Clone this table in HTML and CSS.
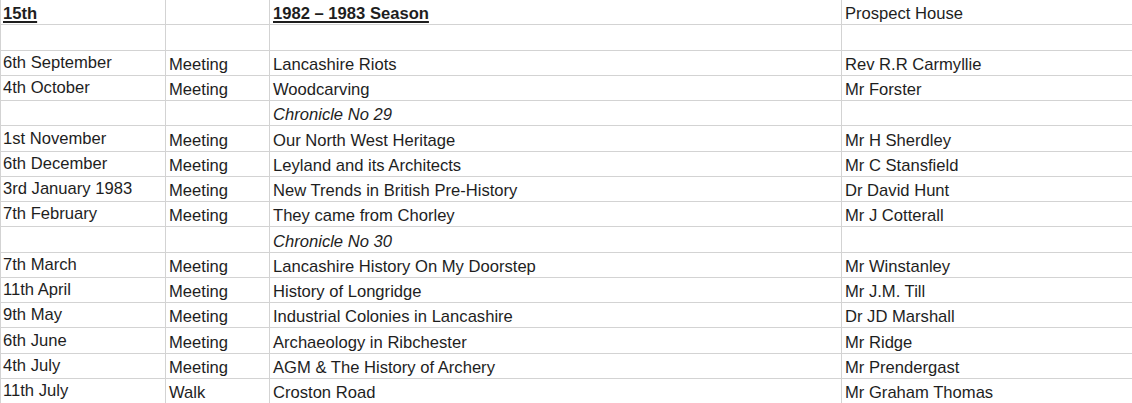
FILE: index.html
```html
<!DOCTYPE html>
<html lang="en">
<head>
<meta charset="utf-8">
<title>1982 – 1983 Season</title>
<link rel="stylesheet" href="styles.css">
</head>
<body>
<div class="sheet">
  <div class="row head">
    <div class="cell c1"><span class="bu">15th</span></div>
    <div class="cell c2"></div>
    <div class="cell c3"><span class="bu">1982 – 1983 Season</span></div>
    <div class="cell c4">Prospect House</div>
  </div>
  <div class="row">
    <div class="cell c1"></div><div class="cell c2"></div><div class="cell c3"></div><div class="cell c4"></div>
  </div>
  <div class="row">
    <div class="cell c1">6th September</div><div class="cell c2">Meeting</div><div class="cell c3">Lancashire Riots</div><div class="cell c4">Rev R.R Carmyllie</div>
  </div>
  <div class="row">
    <div class="cell c1">4th October</div><div class="cell c2">Meeting</div><div class="cell c3">Woodcarving</div><div class="cell c4">Mr Forster</div>
  </div>
  <div class="row">
    <div class="cell c1"></div><div class="cell c2"></div><div class="cell c3 it">Chronicle No 29</div><div class="cell c4"></div>
  </div>
  <div class="row">
    <div class="cell c1">1st November</div><div class="cell c2">Meeting</div><div class="cell c3">Our North West Heritage</div><div class="cell c4">Mr H Sherdley</div>
  </div>
  <div class="row">
    <div class="cell c1">6th December</div><div class="cell c2">Meeting</div><div class="cell c3">Leyland and its Architects</div><div class="cell c4">Mr C Stansfield</div>
  </div>
  <div class="row">
    <div class="cell c1">3rd January 1983</div><div class="cell c2">Meeting</div><div class="cell c3">New Trends in British Pre-History</div><div class="cell c4">Dr David Hunt</div>
  </div>
  <div class="row">
    <div class="cell c1">7th February</div><div class="cell c2">Meeting</div><div class="cell c3">They came from Chorley</div><div class="cell c4">Mr J Cotterall</div>
  </div>
  <div class="row">
    <div class="cell c1"></div><div class="cell c2"></div><div class="cell c3 it">Chronicle No 30</div><div class="cell c4"></div>
  </div>
  <div class="row">
    <div class="cell c1">7th March</div><div class="cell c2">Meeting</div><div class="cell c3">Lancashire History On My Doorstep</div><div class="cell c4">Mr Winstanley</div>
  </div>
  <div class="row">
    <div class="cell c1">11th April</div><div class="cell c2">Meeting</div><div class="cell c3">History of Longridge</div><div class="cell c4">Mr J.M. Till</div>
  </div>
  <div class="row">
    <div class="cell c1">9th May</div><div class="cell c2">Meeting</div><div class="cell c3">Industrial Colonies in Lancashire</div><div class="cell c4">Dr JD Marshall</div>
  </div>
  <div class="row">
    <div class="cell c1">6th June</div><div class="cell c2">Meeting</div><div class="cell c3">Archaeology in Ribchester</div><div class="cell c4">Mr Ridge</div>
  </div>
  <div class="row">
    <div class="cell c1">4th July</div><div class="cell c2">Meeting</div><div class="cell c3">AGM &amp; The History of Archery</div><div class="cell c4">Mr Prendergast</div>
  </div>
  <div class="row">
    <div class="cell c1">11th July</div><div class="cell c2">Walk</div><div class="cell c3">Croston Road</div><div class="cell c4">Mr Graham Thomas</div>
  </div>
</div>
</body>
</html>
```

FILE: styles.css
```css
html, body {
  margin: 0;
  padding: 0;
  background: #ffffff;
  overflow: hidden;
}

.sheet {
  display: grid;
  grid-auto-rows: 25.28px;
  font-family: "Liberation Sans", Arial, sans-serif;
  font-size: 16.6px;
  color: #1e1e1e;
}

.row {
  display: grid;
  grid-template-columns: 165px 104px 572px 1fr;
}

.cell {
  border-left: 1px solid #d3d3d3;
  border-bottom: 1px solid #d3d3d3;
  display: flex;
  align-items: flex-end;
  padding: 0 0 1px 3px;
  line-height: 19px;
  white-space: nowrap;
  overflow: hidden;
}

.c1 {
  padding-left: 2px;
  padding-bottom: 3px;
}

.head .cell {
  padding-bottom: 1px;
}

.bu {
  font-weight: bold;
  text-decoration: underline;
  text-decoration-thickness: 2px;
  text-underline-offset: 2px;
}

.it {
  font-style: italic;
}
```
